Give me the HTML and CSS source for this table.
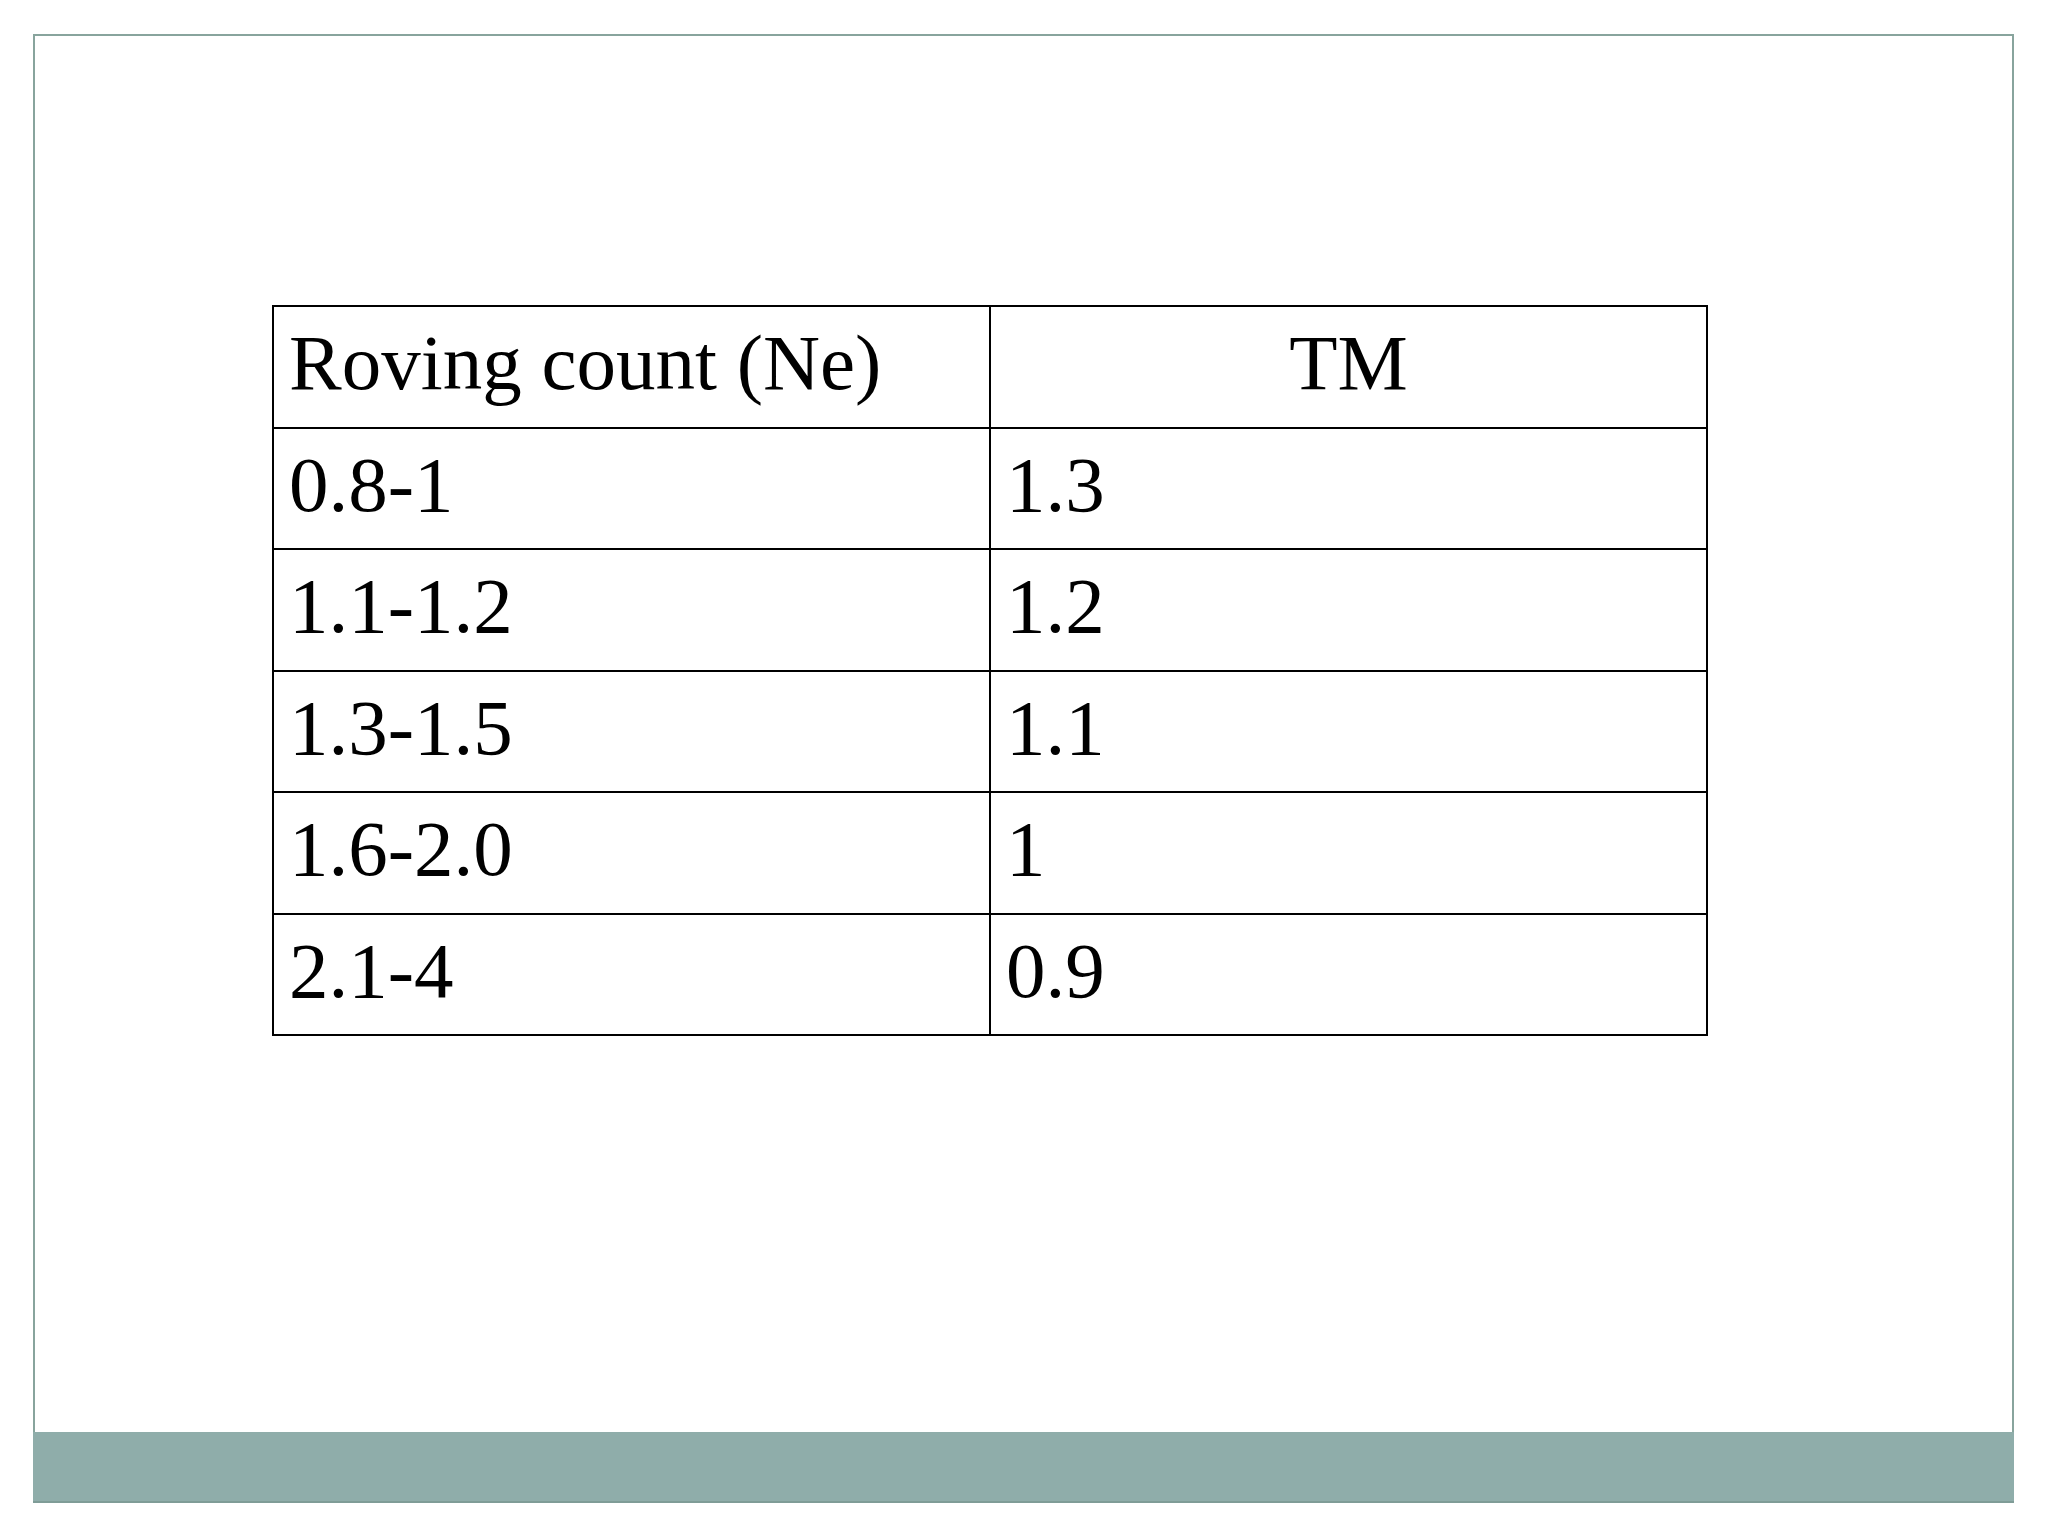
FILE: index.html
```html
<!DOCTYPE html>
<html>
<head>
<meta charset="utf-8">
<link rel="stylesheet" href="styles.css">
</head>
<body>
<div class="slide">
  <div class="content">
    <table class="data">
      <tr><td>Roving count (Ne)</td><td class="center">TM</td></tr>
      <tr><td>0.8-1</td><td>1.3</td></tr>
      <tr><td>1.1-1.2</td><td>1.2</td></tr>
      <tr><td>1.3-1.5</td><td>1.1</td></tr>
      <tr><td>1.6-2.0</td><td>1</td></tr>
      <tr><td>2.1-4</td><td>0.9</td></tr>
    </table>
  </div>
  <div class="band"></div>
</div>
</body>
</html>
```

FILE: styles.css
```css
html, body {
  margin: 0;
  padding: 0;
  background: #ffffff;
}
body {
  width: 2048px;
  height: 1536px;
  overflow: hidden;
}
.slide {
  box-sizing: border-box;
  margin: 34px 0 0 33px;
  width: 1981px;
  height: 1469px;
  border: 2px solid #88a49d;
  border-bottom: none;
  display: flex;
  flex-direction: column;
}
.content {
  flex: 1;
  padding: 269px 0 0 237px;
}
.band {
  height: 69px;
  margin: 0 -2px;
  background: #8fadaa;
  border-bottom: 2px solid #7f9c97;
}
.data {
  border-collapse: collapse;
  table-layout: fixed;
  width: 1436px;
  font-family: "Liberation Serif", "Times New Roman", serif;
  font-size: 79px;
  color: #000;
}
.data td {
  width: 50%;
  border: 2px solid #000;
  padding: 11px 15px 18.5px 15px;
  line-height: 90px;
  height: 90px;
  white-space: nowrap;
}
.data td.center {
  text-align: center;
}
```
